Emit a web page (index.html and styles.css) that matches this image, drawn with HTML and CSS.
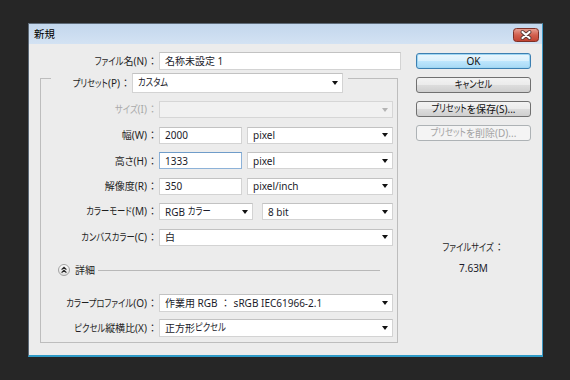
FILE: index.html
```html
<!DOCTYPE html>
<html lang="ja">
<head>
<meta charset="utf-8">
<title>新規</title>
<link rel="stylesheet" href="styles.css">
</head>
<body>
<div class="dialog">
  <div class="titlebar">
    <span class="title">新規</span>
    <span class="close">
      <svg width="26" height="14" viewBox="0 0 26 14">
        <defs>
          <linearGradient id="cg" x1="0" y1="0" x2="0" y2="1">
            <stop offset="0" stop-color="#e8a396"/>
            <stop offset="0.5" stop-color="#d2604f"/>
            <stop offset="1" stop-color="#c04130"/>
          </linearGradient>
        </defs>
        <rect x="0.5" y="0.5" width="25" height="13" rx="3" fill="url(#cg)" stroke="#7d3027"/>
        <path d="M9.5 4 L16.5 10 M16.5 4 L9.5 10" stroke="#5a3b38" stroke-width="4" stroke-linecap="round"/>
        <path d="M9.5 4 L16.5 10 M16.5 4 L9.5 10" stroke="#ffffff" stroke-width="2.2" stroke-linecap="round"/>
      </svg>
    </span>
  </div>
  <div class="client">
    <div class="main">
      <div class="name-row">
        <span class="lbl name-lbl"><span class="k">ファイル</span>名(N)<span class="colon">：</span></span>
        <div class="field name-field">名称未設定 1</div>
      </div>
      <div class="group">
        <div class="legend">
          <span class="lbl legend-lbl"><span class="k">プリセット</span>(P)<span class="colon">：</span></span>
          <div class="field select preset-field"><span class="k">カスタム</span><span class="arrow"></span></div>
        </div>
        <div class="row first">
          <span class="lbl disabled-lbl"><span class="k">サイズ</span>(I)<span class="colon">：</span></span>
          <div class="field select disabled"><span class="arrow grey"></span></div>
        </div>
        <div class="row">
          <span class="lbl">幅(W)<span class="colon">：</span></span>
          <div class="pair">
            <div class="field num">2000</div>
            <div class="field select unit">pixel<span class="arrow"></span></div>
          </div>
        </div>
        <div class="row">
          <span class="lbl">高さ(H)<span class="colon">：</span></span>
          <div class="pair">
            <div class="field num focus">1333</div>
            <div class="field select unit">pixel<span class="arrow"></span></div>
          </div>
        </div>
        <div class="row">
          <span class="lbl">解像度(R)<span class="colon">：</span></span>
          <div class="pair">
            <div class="field num">350</div>
            <div class="field select unit">pixel/inch<span class="arrow"></span></div>
          </div>
        </div>
        <div class="row">
          <span class="lbl"><span class="k">カラーモード</span>(M)<span class="colon">：</span></span>
          <div class="pair wide-gap">
            <div class="field select mode">RGB&nbsp;<span class="k">カラー</span><span class="arrow"></span></div>
            <div class="field select bits">8 bit<span class="arrow"></span></div>
          </div>
        </div>
        <div class="row">
          <span class="lbl"><span class="k">カンバスカラー</span>(C)<span class="colon">：</span></span>
          <div class="field select">白<span class="arrow"></span></div>
        </div>
        <div class="details">
          <span class="chev">
            <svg width="12" height="12" viewBox="0 0 12 12">
              <defs>
                <linearGradient id="bg" x1="0" y1="0" x2="0" y2="1">
                  <stop offset="0" stop-color="#ffffff"/>
                  <stop offset="1" stop-color="#dcdcdc"/>
                </linearGradient>
              </defs>
              <circle cx="6" cy="6" r="5.5" fill="url(#bg)" stroke="#a2a2a2"/>
              <path d="M3.6 5.6 L6 3.3 L8.4 5.6 M3.6 8.6 L6 6.3 L8.4 8.6" fill="none" stroke="#262626" stroke-width="1.3"/>
            </svg>
          </span>
          <span class="details-text">詳細</span>
          <span class="rule"></span>
        </div>
        <div class="row tall profile">
          <span class="lbl"><span class="k">カラープロファイル</span>(O)<span class="colon">：</span></span>
          <div class="field select">作業用 RGB<span class="colon wide">：</span>sRGB IEC61966-2.1<span class="arrow"></span></div>
        </div>
        <div class="row tall aspect">
          <span class="lbl"><span class="k">ピクセル</span>縦横比(X)<span class="colon">：</span></span>
          <div class="field select">正方形<span class="k">ピクセル</span><span class="arrow"></span></div>
        </div>
      </div>
    </div>
    <div class="side">
      <div class="btn default">OK</div>
      <div class="btn"><span class="k">キャンセル</span></div>
      <div class="btn"><span class="k">プリセット</span>を保存(S)...</div>
      <div class="btn off"><span class="k">プリセット</span>を削除(D)...</div>
      <div class="size-lbl"><span class="k">ファイルサイズ</span><span class="colon">：</span></div>
      <div class="size-val">7.63M</div>
    </div>
  </div>
</div>
</body>
</html>
```

FILE: styles.css
```css
html, body {
  margin: 0;
  padding: 0;
}
body {
  background: #262626;
  width: 570px;
  height: 380px;
  overflow: hidden;
  font-family: "Noto Sans", "Noto Sans CJK JP", sans-serif;
  font-size: 10px;
  font-feature-settings: "palt";
  color: #1e1e1e;
}
.k {
  display: inline-block;
  font-size: 8.3px;
  line-height: 14px;
  transform: scaleY(1.27);
  transform-origin: 50% 74%;
}
.colon {
  display: inline-block;
  width: 11px;
  text-align: center;
  font-feature-settings: normal;
}
.colon.wide {
  width: 16px;
}
.dialog {
  margin: 23px 0 0 28px;
  width: 513px;
  height: 331px;
  border: 1px solid #5d6a77;
  border-right-color: #3d97c2;
  border-bottom: 2px solid #2f9bc7;
  display: flex;
  flex-direction: column;
}
.titlebar {
  height: 20px;
  flex: none;
  background: linear-gradient(#c3d7ed, #d3e2f3);
  display: flex;
  align-items: center;
  justify-content: space-between;
  padding: 0 3px 0 5px;
}
.title {
  font-size: 10.5px;
  line-height: 14px;
  color: #000;
}
.close {
  display: flex;
  margin-top: 1px;
}
.client {
  flex: 1;
  background: #ececec;
  display: flex;
  padding: 8px 0 0 11px;
}
.main {
  width: 361px;
  display: flex;
  flex-direction: column;
}
.lbl {
  white-space: nowrap;
  line-height: 14px;
  text-align: right;
}
.name-row {
  display: flex;
  align-items: center;
  height: 18px;
}
.name-lbl {
  width: 118px;
  padding-right: 1px;
}
.field {
  position: relative;
  box-sizing: border-box;
  background: #fff;
  border: 1px solid #d3d3d3;
  border-top-color: #c2c2c2;
  height: 100%;
  display: flex;
  align-items: center;
  padding-left: 5px;
  line-height: 14px;
  white-space: nowrap;
  color: #1b1b2a;
}
.name-field {
  width: 242px;
  height: 18px;
}
.select {
  padding-right: 14px;
}
.arrow {
  position: absolute;
  right: 4px;
  top: 50%;
  margin-top: -2px;
  width: 0;
  height: 0;
  border-left: 3px solid transparent;
  border-right: 3px solid transparent;
  border-top: 4px solid #111;
}
.arrow.grey {
  border-top-color: #b4b4b4;
}
.group {
  margin-top: 8px;
  width: 358px;
  box-sizing: border-box;
  border: 1px solid #bdbdbd;
  display: flex;
  flex-direction: column;
  padding: 0 4px 5px 0;
  height: 265px;
}
.legend {
  align-self: flex-start;
  margin: -6px 0 0 10px;
  height: 20px;
  display: flex;
  align-items: center;
  background: #ececec;
  padding-right: 5px;
}
.legend-lbl {
  width: 80px;
  padding-right: 1px;
}
.preset-field {
  width: 211px;
  height: 20px;
}
.row {
  display: grid;
  grid-template-columns: 118px 234px;
  height: 17px;
  margin-top: 8.5px;
  align-items: center;
}
.row .lbl {
  padding-right: 1px;
}
.row.first {
  margin-top: 8px;
}
.disabled-lbl {
  color: #a9a9a9;
}
.disabled {
  background: #f1f1f1;
  border-color: #d6d6d6;
}
.pair {
  display: flex;
  gap: 5px;
  height: 100%;
}
.pair.wide-gap {
  gap: 9px;
}
.num {
  width: 83px;
  flex: none;
}
.focus {
  border-color: #8db2d8;
  border-top-color: #6f9cc9;
}
.unit {
  flex: 1;
}
.mode {
  width: 94px;
  flex: none;
}
.bits {
  flex: 1;
}
.details {
  margin-top: 17.5px;
  height: 14px;
  display: flex;
  align-items: center;
  padding-left: 17px;
}
.chev {
  display: flex;
}
.details-text {
  margin-left: 5px;
  line-height: 14px;
}
.rule {
  flex: 1;
  height: 1px;
  background: #b8b8b8;
  margin: 1px 13px 0 3px;
}
.row.tall {
  height: 18px;
}
.row.profile {
  margin-top: 17px;
}
.row.aspect {
  margin-top: 7px;
}
.side {
  margin-left: 15px;
  width: 115px;
  display: flex;
  flex-direction: column;
  padding-top: 1px;
}
.btn {
  box-sizing: border-box;
  height: 16px;
  margin-bottom: 8px;
  border: 1px solid #707070;
  border-radius: 3px;
  background: linear-gradient(#f3f3f3 0%, #ebebeb 50%, #dddddd 51%, #cfcfcf 100%);
  display: flex;
  align-items: center;
  justify-content: center;
  line-height: 13px;
  white-space: nowrap;
  color: #111;
}
.btn.default {
  border-color: #3c7fb1;
  box-shadow: inset 0 0 0 1px #9fd6f2;
  background: linear-gradient(#eaf6fd 0%, #d9f0fc 50%, #bee6fd 51%, #a7d9f5 100%);
}
.btn.off {
  border-color: #adb2b5;
  background: #f4f4f4;
  color: #a3a3a3;
}
.size-lbl {
  margin-top: 91px;
  text-align: center;
  line-height: 14px;
}
.size-val {
  margin-top: 6px;
  text-align: center;
  line-height: 14px;
  color: #1b1b2a;
}
```
